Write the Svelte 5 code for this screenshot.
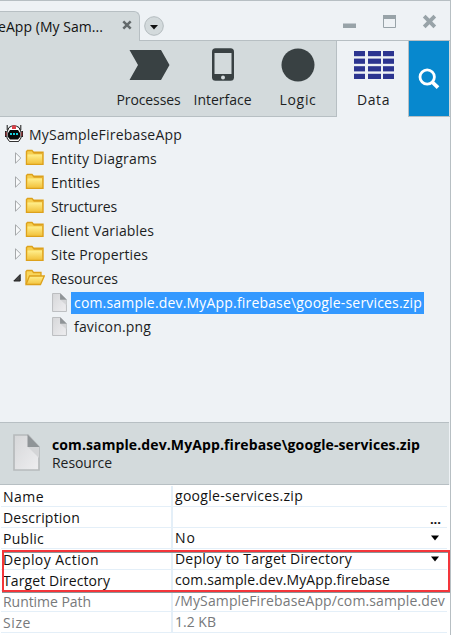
<script>
  function fit(node, width) {
    if (!width) return;
    const natural = node.getBoundingClientRect().width;
    const spacing = (width - natural) / node.textContent.length;
    node.style.letterSpacing = `${spacing}px`;
  }

  const folders = [
    { name: 'Entity Diagrams', w: 106 },
    { name: 'Entities', w: 49 },
    { name: 'Structures', w: 66 },
    { name: 'Client Variables', w: 103 },
    { name: 'Site Properties', w: 97 },
    { name: 'Resources', w: 67, open: true }
  ];
  const files = [
    { name: 'com.sample.dev.MyApp.firebase\\google-services.zip', w: 348, selected: true },
    { name: 'favicon.png', w: 77 }
  ];
  const properties = [
    { name: 'Name', w: 41, value: 'google-services.zip', vw: 128 },
    { name: 'Description', w: 77, value: '', more: true },
    { name: 'Public', w: 41, value: 'No', vw: 21, drop: true },
    { name: 'Deploy Action', w: 96, value: 'Deploy to Target Directory', vw: 177, drop: true },
    { name: 'Target Directory', w: 107, value: 'com.sample.dev.MyApp.firebase', vw: 215 },
    { name: 'Runtime Path', w: 88, value: '/MySampleFirebaseApp/com.sample.dev', vw: 270, muted: true },
    { name: 'Size', w: 28, value: '1.2 KB', vw: 41, muted: true }
  ];
</script>

{#snippet page(w, h)}
  <svg width={w} height={h} viewBox="0 0 27 37" preserveAspectRatio="none">
    <defs>
      <linearGradient id="paper" x1="0" y1="0" x2="1" y2="1">
        <stop offset="0" stop-color="#d6d7d9" /><stop offset="1" stop-color="#eeeef0" />
      </linearGradient>
    </defs>
    <path d="M1 1H15L26 13V36H1Z" fill="url(#paper)" stroke="#b7babc" stroke-width="1.7" />
    <path d="M15 13L26 24V13Z" fill="#d4d5d7" />
    <path d="M14.5 0.5V13H26.5Z" fill="#8f9497" />
  </svg>
{/snippet}

<div class="window">
  <header class="titlebar">
    <div class="tab">
      <span class="tabname"><span use:fit={105}>eApp (My Sam...</span></span>
      <svg class="tabx" width="10" height="10" viewBox="0 0 10 10"><path d="M1.3 1.3L8.7 8.7M8.7 1.3L1.3 8.7" stroke="#62696b" stroke-width="2.5" /></svg>
    </div>
    <div class="tabfill">
      <svg class="tabmenu" width="20" height="20" viewBox="0 0 20 20"><circle cx="10" cy="10" r="9.3" fill="#d3dadc" stroke="#b3bbbe" /><path d="M6 9H14L10 13.5Z" fill="#111" /></svg>
      <svg class="controls" width="95" height="16" viewBox="0 0 95 16">
        <path d="M0 9.5H13V14H0Z" fill="#98a3a8" />
        <path d="M40.5 1.5H52.5V13.5H40.5Z" fill="#eef2f5" stroke="#98a3a8" /><path d="M40 1H53V5H40Z" fill="#98a3a8" />
        <path d="M81.2 2.2L91.8 12.8M91.8 2.2L81.2 12.8" stroke="#98a3a8" stroke-width="3.8" />
      </svg>
    </div>
  </header>

  <nav class="toolbar">
    <div class="tool processes">
      <svg width="41" height="32" viewBox="0 0 41 32"><path d="M.5 1H32L40.5 16L32 31H.5L9 16Z" fill="#394143" /></svg>
      <span use:fit={64}>Processes</span>
    </div>
    <div class="tool interface">
      <svg width="22" height="33" viewBox="0 0 22 33"><rect y=".3" width="22" height="32.4" rx="3.5" fill="#394143" /><path d="M2.5 5H19.5V26H2.5Z" fill="#d3dadc" /><circle cx="11" cy="29.5" r="2" fill="#d3dadc" /></svg>
      <span use:fit={58}>Interface</span>
    </div>
    <div class="tool logic">
      <svg width="34" height="34" viewBox="0 0 34 34"><circle cx="17" cy="17" r="16.5" fill="#394143" /></svg>
      <span use:fit={37}>Logic</span>
    </div>
    <div class="tool data">
      <svg width="40" height="28" viewBox="0 0 40 28" fill="#2c3590">
        {#each [0, 7.6, 15.2, 22.8] as y}
          {#each [0, 14, 29] as x}<rect {x} {y} width={x === 14 ? 13 : 11} height="5.2" />{/each}
        {/each}
      </svg>
      <span use:fit={33}>Data</span>
    </div>
    <div class="search">
      <svg width="22" height="22" viewBox="0 0 22 22" fill="none" stroke="#fff"><circle cx="9.2" cy="9" r="7.2" stroke-width="2.8" /><path d="M14.2 14L20 19.6" stroke-width="3.8" /></svg>
    </div>
  </nav>

  <main class="tree">
    <div class="row root">
      <svg width="18" height="18" viewBox="0 0 18 18">
        <path d="M2.2 0V5M15.8 0V5" stroke="#171717" />
        <path d="M4 2.5Q9-1 14 2.5L16 7V13L13.5 16.5H4.5L2 13V7Z" fill="#fff" stroke="#171717" />
        <path d="M7 .5H11V4H7Z" fill="#dc4148" /><path d="M.8 6V12M17.2 6V12" stroke="#111" stroke-width="1.5" />
        <path d="M1.2 7V11M16.8 7V11" stroke="#df3944" stroke-width=".7" />
        <path d="M5 5H13L15 8V12L13 14.5H5L3 12V8Z" fill="#080a0b" />
        <path d="M5 9H7M8 9H10M11 9H13" stroke="#13cfe0" stroke-width="2" />
        <path d="M5 16.5H13" stroke="#333" />
      </svg>
      <span use:fit={153}>MySampleFirebaseApp</span>
    </div>
    {#each folders as folder}
      <div class="row folder">
        <svg class="arrow" width="9" height="14" viewBox="0 0 9 14">
          {#if folder.open}
            <path d="M7.2 3.5V10H.8Z" fill="#444" stroke="#222" />
          {:else}
            <path d="M2.5 1.8V12.2L7.8 7Z" fill="#f8fafb" stroke="#a5a8aa" />
          {/if}
        </svg>
        <svg class="foldericon" width="20" height="18" viewBox="0 0 20 18">
          <defs><linearGradient id="gold" x1="0" y1="0" x2="0" y2="1"><stop offset="0" stop-color="#ffef8d" /><stop offset="1" stop-color="#f3c43f" /></linearGradient></defs>
          {#if folder.open}
            <path d="M1 15V2.5L2 1.5H7L8.5 3.5H16V7" fill="#f9d65c" stroke="#dda11b" stroke-width="1.3" />
            <path d="M1 15.5L4.5 7H19.3L15.5 15.5Z" fill="url(#gold)" stroke="#dda11b" stroke-width="1.3" />
          {:else}
            <path d="M1.5 15.3V2.5L2.5 1.5H7L8.5 3.3H18V15.3Z" fill="#f6cf50" stroke="#dda11b" stroke-width="1.4" />
            <path d="M2.5 5.5H17V14.3H2.5Z" fill="url(#gold)" /><path d="M8.5 4.5H18" stroke="#e5ae31" />
          {/if}
        </svg>
        <span use:fit={folder.w}>{folder.name}</span>
      </div>
    {/each}
    {#each files as file}
      <div class="row file">
        {@render page(15, 19)}
        <span class="filename" class:selected={file.selected}><span use:fit={file.w}>{file.name}</span></span>
      </div>
    {/each}
  </main>

  <section class="summary">
    {@render page(27, 37)}
    <div class="summarytext">
      <strong><span use:fit={368}>com.sample.dev.MyApp.firebase\google-services.zip</span></strong>
      <div><span use:fit={60}>Resource</span></div>
    </div>
  </section>

  <section class="properties">
    {#each properties as p}
      <div class="property" class:muted={p.muted}>
        <div class="key"><span use:fit={p.w}>{p.name}</span></div>
        <div class="value">
          <span class="valuetext"><span use:fit={p.vw}>{p.value}</span></span>
          {#if p.drop}<svg width="8" height="6" viewBox="0 0 8 6"><path d="M0 .5H8L4 5.5Z" fill="#000" /></svg>{/if}
          {#if p.more}<b class="more">...</b>{/if}
        </div>
      </div>
    {/each}
    <div class="highlight"></div>
  </section>
</div>

<style>
  .window { box-sizing: border-box; width: 451px; height: 635px; overflow: hidden; display: flex; flex-direction: column; background: #eef2f5; border-top: 1px solid #b7bfc3; border-right: 1px solid #b7bfc3; font: 14px/20px "Open Sans", "Noto Sans", sans-serif; color: #1c1e1f; white-space: nowrap; }
  svg { display: block; flex: none; }
  .titlebar { height: 40px; display: flex; align-items: flex-end; flex: none; }
  .tab { box-sizing: border-box; width: 140px; height: 30px; display: flex; align-items: center; justify-content: space-between; padding: 0 7px 0 0; background: #d3dadc; border: solid #b7bfc3; border-width: 1px 1px 0 0; border-radius: 0 6px 0 0; color: #111; }
  .tabname { margin-left: -2px; }
  .tabx { margin-top: -3px; }
  .tabfill { box-sizing: border-box; height: 40px; flex: 1; display: flex; justify-content: space-between; border-bottom: 1px solid #b7bfc3; padding: 15px 12px 0 4px; }
  .controls { margin-top: -2px; }
  .toolbar { box-sizing: border-box; height: 76px; flex: none; display: flex; background: #d3dadc; border-bottom: 1px solid #b7bfc3; padding-left: 110px; padding-right: 1px; }
  .tool { box-sizing: border-box; display: flex; flex-direction: column; align-items: center; justify-content: space-between; padding: 8px 0 6px; }
  .processes { width: 77px; }
  .interface { width: 71px; }
  .logic { width: 79px; padding-left: 2px; padding-top: 7px; border-right: 1px solid #b7bfc3; }
  .data { width: 72px; height: 76px; background: #eef2f5; border-right: 1px solid #b7bfc3; padding: 10px 0 7px 2px; }
  .processes svg { margin-left: 1px; }
  .interface svg { margin-top: -1px; }
  .search { width: 40px; background: #0788ce; display: flex; align-items: center; justify-content: center; }
  .tree { height: 305px; box-sizing: border-box; padding-top: 6px; flex: none; }
  .row { height: 24px; display: flex; align-items: center; }
  .root { padding-left: 5px; gap: 6px; }
  .root svg { margin-top: -2px; }
  .folder { padding-left: 13px; }
  .arrow { margin-right: 3px; margin-top: -2px; }
  .foldericon { margin-right: 6px; margin-top: -2px; }
  .file { padding-left: 52px; }
  .file > :global(svg) { margin-right: 4px; margin-top: -2px; }
  .filename { height: 22px; line-height: 22px; padding: 0 3px; }
  .selected { background: #3399ff; color: #fff; width: 347px; }
  .summary { box-sizing: border-box; height: 63px; flex: none; display: flex; padding: 11px 0 0 13px; gap: 12px; background: #d3dadc; border: solid #b7bfc3; border-width: 1px 0; margin-right: 1px; color: #1c1e1f; }
  .summarytext { line-height: 18px; padding-top: 2px; }
  .summarytext strong { color: #000; font-weight: 700; display: block; }
  .properties { flex: 1; background: #fff; position: relative; padding: 1px 3px 0 1px; }
  .property { box-sizing: border-box; height: 21px; border-bottom: 1px solid #e4eff8; display: flex; line-height: 22px; color: #111; }
  .key { box-sizing: border-box; width: 172px; padding-left: 2px; border-right: 2px solid #e4eff8; }
  .value { flex: 1; min-width: 0; display: flex; align-items: center; justify-content: space-between; padding: 0 8px 0 2px; }
  .valuetext { min-width: 0; margin-right: -6px; }
  .more { font-size: 13px; line-height: 20px; margin-right: -2px; padding-top: 3px; }
  .muted { color: #77797b; }
  .highlight { position: absolute; box-sizing: border-box; left: 2px; right: 0; top: 65px; height: 42px; border: 2px solid #f4353a; box-shadow: 0 1px 0 #8b9699, inset 0 1px 0 #8b9699; }
</style>
